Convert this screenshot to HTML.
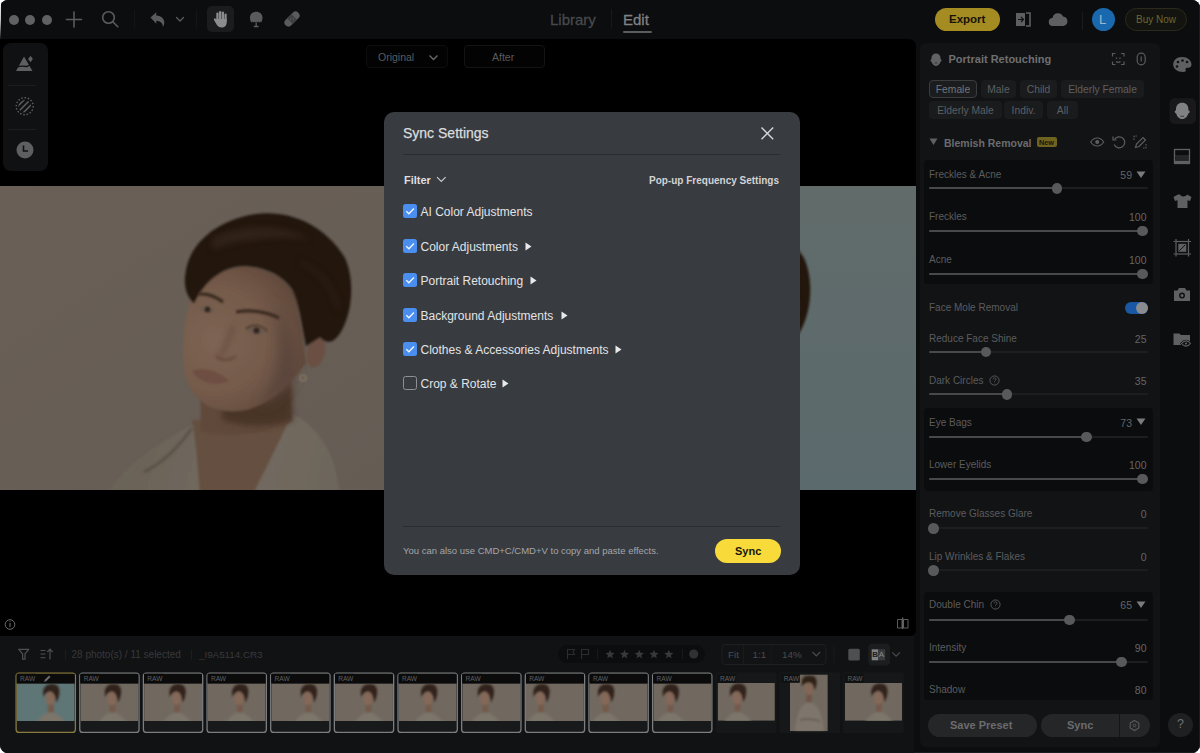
<!DOCTYPE html>
<html><head><meta charset="utf-8"><style>
*{margin:0;padding:0;box-sizing:border-box}
html,body{width:1200px;height:753px;overflow:hidden;background:#fff;font-family:"Liberation Sans",sans-serif}
#win{position:absolute;left:0;top:0;width:1200px;height:753px;background:#0c0d0f;border-radius:8px;overflow:hidden}
.a{position:absolute}
.t{position:absolute;white-space:nowrap;line-height:1}
svg.a{overflow:visible}
</style></head><body>
<div id="win">
<div class="a" style="left:0;top:0;width:1200px;height:40px;background:#0c0d0f"></div>
<div class="a" style="left:1199px;top:0;width:1px;height:753px;background:#1b1c1e"></div>
<div class="a" style="left:0;top:752px;width:1200px;height:1px;background:#1b1c1e"></div>
<!-- TOP BAR -->
<div class="a" style="left:9px;top:14.7px;width:10px;height:10px;border-radius:50%;background:#606163"></div>
<div class="a" style="left:25px;top:14.7px;width:10px;height:10px;border-radius:50%;background:#606163"></div>
<div class="a" style="left:41.5px;top:14.7px;width:10px;height:10px;border-radius:50%;background:#606163"></div>
<svg class="a" style="left:0;top:0" width="340" height="40" viewBox="0 0 340 40">
 <g stroke="#5a5b5d" fill="none" stroke-width="1.6" stroke-linecap="round">
  <path d="M74 12v15M66.5 19.5h15"/>
  <circle cx="108.5" cy="17.5" r="5.8"/>
  <path d="M112.8 21.8l5 5"/>
  <path d="M176.5 17.5l3.5 3.5 3.5-3.5" stroke-width="1.3"/>
 </g>
 <path d="M134.5 10v18M196.5 10v18" stroke="#141517" stroke-width="1"/>
 <path d="M150.5 17.5l5.8-5.2v3.2c4.5.2 8 2.8 8 7 0 1.8-.6 3.3-1.5 4.5.3-3.5-2.5-6-6.5-6.2v3z" fill="#5a5b5d"/>
 <rect x="207" y="6" width="27" height="26" rx="5" fill="#1b1c1e"/>
 <g fill="#8b8c8e"><rect x="216.3" y="12.5" width="2.3" height="10" rx="1.15"/><rect x="219" y="11" width="2.3" height="11" rx="1.15"/><rect x="221.7" y="11.5" width="2.3" height="11" rx="1.15"/><rect x="224.4" y="13.5" width="2.3" height="9" rx="1.15"/><path d="M216.3 19h10.4v3.5c0 3-2.2 5-5 5s-4.2-1.5-5.4-3.5l-2.3-4a1.1 1.1 0 0 1 1.9-1.1l.4.6z"/></g>
 <path d="M250 17.5c0-3.5 2.5-5.8 6.2-5.8s6.3 2.3 6.3 5.8c0 2-.6 3.8-1.3 5l-1-1-1 1.2-1-1.2-1 1.2-1-1.2-1 1.2-1-1.2-1 1.2-1-1.2-1 1c-.7-1.2-1.2-3-1.2-5z" fill="#5a5b5d"/><path d="M256.2 22.5v3.5M253.8 26.5h4.8" stroke="#5a5b5d" stroke-width="1.3"/>
 <g transform="rotate(-45 292 19)"><rect x="283" y="15" width="18" height="8" rx="4" fill="#5a5b5d"/><rect x="289" y="15" width="6" height="8" fill="#3f4042"/><circle cx="291" cy="18" r=".7" fill="#5a5b5d"/><circle cx="293" cy="20" r=".7" fill="#5a5b5d"/></g>
</svg>

<div class="t" style="left:550px;top:11.5px;font-size:15px;color:#48494b;-webkit-text-stroke:0.3px #48494b">Library</div>
<div class="a" style="left:611px;top:9px;width:1px;height:19px;background:#18191b"></div>
<div class="t" style="left:623px;top:11.5px;font-size:15px;color:#808183;-webkit-text-stroke:0.3px #808183">Edit</div>
<div class="a" style="left:623px;top:31px;width:29px;height:2px;background:#5c5d5f;border-radius:1px"></div>

<div class="a" style="left:935px;top:8px;width:65px;height:23px;border-radius:12px;background:#a58c22"></div>
<div class="t" style="left:949px;top:14px;font-size:11.5px;font-weight:bold;color:#15130a">Export</div>
<svg class="a" style="left:1010px;top:8px" width="65" height="24" viewBox="1010 8 65 24">
 <rect x="1016" y="13" width="9" height="13" fill="#5e5f61"/>
 <path d="M1026 13h4v13h-4" fill="none" stroke="#5e5f61" stroke-width="1.6"/>
 <path d="M1018 19.5h5.5M1021 17l2.5 2.5-2.5 2.5" stroke="#111" stroke-width="1.2" fill="none"/>
 <path d="M1053 26a4 4 0 0 1-.5-8 5.5 5.5 0 0 1 10.5-1.5 4.8 4.8 0 0 1 .5 9.5z" fill="#5e5f61"/>
</svg>
<div class="a" style="left:1082px;top:12px;width:1px;height:18px;background:#1a1b1d"></div>
<div class="a" style="left:1092px;top:8px;width:23px;height:23px;border-radius:50%;background:#1a68ad"></div>
<div class="t" style="left:1099px;top:13px;font-size:13px;color:#9fb8d0">L</div>
<div class="a" style="left:1125px;top:8px;width:62px;height:23px;border-radius:12px;background:#13130f;border:1px solid #2b2a1c"></div>
<div class="t" style="left:1136px;top:15px;font-size:10px;color:#6a692f">Buy Now</div>
<!-- CANVAS -->
<div class="a" style="left:0;top:39px;width:916px;height:597px;background:#000;border-radius:0 7px 6px 0;overflow:hidden">
 <svg class="a" style="left:0;top:147px;overflow:hidden" width="916" height="304" viewBox="0 0 916 304">
  <defs>
   <filter id="bl1" filterUnits="userSpaceOnUse" x="-100" y="-300" width="1200" height="900"><feGaussianBlur stdDeviation="1"/></filter>
   <filter id="bl2" filterUnits="userSpaceOnUse" x="-100" y="-300" width="1200" height="900"><feGaussianBlur stdDeviation="1.8"/></filter>
   <filter id="bl3" filterUnits="userSpaceOnUse" x="-100" y="-300" width="1200" height="900"><feGaussianBlur stdDeviation="3"/></filter>
   <filter id="bl4" filterUnits="userSpaceOnUse" x="-100" y="-300" width="1200" height="900"><feGaussianBlur stdDeviation="6"/></filter>
   <linearGradient id="bgL" x1="0" y1="0" x2="1" y2="1"><stop offset="0" stop-color="#695f57"/><stop offset="1" stop-color="#655d55"/></linearGradient>
   <linearGradient id="bgR" x1="0" y1="0" x2="0" y2="1"><stop offset="0" stop-color="#616b6a"/><stop offset="1" stop-color="#5b6a6d"/></linearGradient>
   <radialGradient id="skin" gradientUnits="userSpaceOnUse" cx="215" cy="340" r="100"><stop offset="0" stop-color="#7e6453"/><stop offset=".55" stop-color="#745a4a"/><stop offset="1" stop-color="#5c4538"/></radialGradient>
   <linearGradient id="shirtG" gradientUnits="userSpaceOnUse" x1="110" y1="430" x2="350" y2="490"><stop offset="0" stop-color="#6a6257"/><stop offset=".6" stop-color="#726a5f"/><stop offset="1" stop-color="#6c655a"/></linearGradient>
   <g id="woman" transform="translate(0,-186)">
    <path d="M108 494 C120 470 150 448 192 425 L205 418 L291 414 C305 418 318 432 328 450 C334 462 338 478 340 494 Z" fill="url(#shirtG)" filter="url(#bl1)"/>
    <path d="M192 420 C196 440 198 470 200 494 L253 494 C265 470 280 440 291 416 Z" fill="#655040" filter="url(#bl1)"/>
    <path d="M192 428 C180 445 165 462 144 472" stroke="#4e453b" stroke-width="2" fill="none" filter="url(#bl2)"/>
    <path d="M200 392 C201 405 201 418 200 431 C222 438 265 436 292 421 C290 405 290 392 291 380 Z" fill="#604a3b" filter="url(#bl1)"/>
    <path d="M222 404 C250 410 275 398 292 382 L293 420 C272 428 245 428 222 420 Z" fill="#4a3527" filter="url(#bl3)"/>
    <path d="M196 289 C186 305 183 330 183 363 C185 380 190 395 208 406 C220 412 235 413 250 409 C272 402 290 385 306 363 C304 345 300 320 296 296 C288 280 270 268 245 266 C225 267 205 277 196 289 Z" fill="url(#skin)" filter="url(#bl1)"/>
    <path d="M272 300 C290 325 298 350 295 378 C283 395 272 402 258 406 C278 382 287 345 272 300 Z" fill="#56423a" opacity=".75" filter="url(#bl4)"/>
    <ellipse cx="316" cy="352" rx="9" ry="16" fill="#6a5043" transform="rotate(15 316 352)" filter="url(#bl1)"/>
    <path d="M256 214 C290 210 325 225 345 258 C355 280 352 310 343 328 C336 342 328 346 320 337 L306 346 C301 322 299 302 292 289 C282 275 265 267 245 266 C225 266 206 278 194 303 C186 296 183 285 186 270 C190 245 215 220 256 214 Z" fill="#231810" filter="url(#bl1)"/>
    <path d="M212 238 C240 224 282 222 312 240 C290 236 250 236 212 250 Z" fill="#3a2c21" opacity=".6" filter="url(#bl3)"/>
    <path d="M300 262 C320 270 335 290 338 310" stroke="#35281e" stroke-width="4" opacity=".5" fill="none" filter="url(#bl3)"/>
    <path d="M198 294 Q211 293 223 302" stroke="#3a2b22" stroke-width="3.2" fill="none" filter="url(#bl1)"/>
    <path d="M236 312 Q258 308 279 318" stroke="#3a2b22" stroke-width="3.2" fill="none" filter="url(#bl1)"/>
    <path d="M199 309 C203 305 211 305 215 311 C210 314 203 313 199 309Z" fill="#6a5a50" filter="url(#bl1)"/><circle cx="207.5" cy="309.5" r="2.8" fill="#30231b" filter="url(#bl1)"/>
    <path d="M247 330 C252 325 261 325 266 332 C260 336 252 335 247 330Z" fill="#6a5a50" filter="url(#bl1)"/><circle cx="256.5" cy="330.5" r="3" fill="#30231b" filter="url(#bl1)"/><path d="M246 329 C252 324 261 324 267 331" stroke="#3a2b22" stroke-width="1.2" fill="none" filter="url(#bl1)"/>
    <path d="M234 325 C230 338 224 348 221 356" stroke="#5e4739" stroke-width="3" fill="none" filter="url(#bl3)"/>
    <path d="M216 356 C222 361 230 361 236 356" stroke="#5e4538" stroke-width="2.2" fill="none" filter="url(#bl2)"/>
    <path d="M192 371 C205 366 220 372 229 381 C215 387 200 383 192 371 Z" fill="#6e4d42" filter="url(#bl1)"/>
    <circle cx="303" cy="378" r="3" fill="none" stroke="#8e8068" stroke-width="1.2" filter="url(#bl1)"/>
   </g>
  </defs>
  <rect x="0" y="0" width="457" height="304" fill="url(#bgL)"/>
  <use href="#woman"/>
  <rect x="459" y="0" width="457" height="304" fill="url(#bgR)"/>
  <use href="#woman" x="459"/>
 </svg>
</div>
<!-- left tools -->
<div class="a" style="left:3px;top:43px;width:45px;height:128px;background:#101113;border-radius:8px"></div>
<div class="a" style="left:8px;top:85px;width:28px;height:1px;background:#1c1d1f"></div>
<div class="a" style="left:8px;top:129px;width:28px;height:1px;background:#1c1d1f"></div>
<svg class="a" style="left:0;top:40px" width="50" height="130" viewBox="0 40 50 130">
 <path d="M16 71l8-14.5 8.5 14.5z" fill="#5e5f61"/>
 <path d="M17.5 67c2.5-1.5 6.5-1 9.5-.5 1.5-.3 3-1.8 4-3.5" stroke="#101113" stroke-width="1.3" fill="none"/>
 <path d="M30.5 55.5l1.6 3.2 1.6.3-1.6.3-1.6 3.2-1.6-3.2-1.6-.3 1.6-.3z" fill="#5e5f61"/>
 <circle cx="30.5" cy="59" r="2" fill="#5e5f61"/>
 <circle cx="24.7" cy="106.2" r="8.5" fill="none" stroke="#5e5f61" stroke-width="1.4" stroke-dasharray="1.5 1.8"/>
 <clipPath id="cc"><circle cx="24.7" cy="106.2" r="6.3"/></clipPath>
 <g clip-path="url(#cc)" stroke="#5e5f61" stroke-width="1.5"><path d="M12 112l14-14M15 115l14-14M18 118l14-14M9 109l14-14M21 121l14-14"/></g>
 <circle cx="25" cy="150" r="8.5" fill="#5e5f61"/>
 <path d="M23.5 145.5v5.5h4.5" stroke="#111" stroke-width="1.6" fill="none"/>
</svg>
<!-- Original / After -->
<div class="a" style="left:366px;top:45px;width:82px;height:23px;border:1px solid #0d0d0e;border-radius:4px;background:#030303"></div>
<div class="t" style="left:378px;top:52px;font-size:10.5px;color:#5a5b5d">Original</div>
<svg class="a" style="left:428px;top:53.5px" width="12" height="8"><path d="M1.5 1.5l4 4 4-4" stroke="#6a6b6d" stroke-width="1.3" fill="none"/></svg>
<div class="a" style="left:464px;top:45px;width:81px;height:23px;border:1px solid #141415;border-radius:4px;background:#030303"></div>
<div class="t" style="left:492px;top:52px;font-size:10.5px;color:#5a5b5d">After</div>
<!-- info & compare -->
<svg class="a" style="left:0;top:610px" width="920" height="30" viewBox="0 610 920 30">
 <circle cx="10" cy="624.5" r="4.8" fill="none" stroke="#6a6b6d" stroke-width="1"/>
 <path d="M10 623v4M10 621.3v.6" stroke="#6a6b6d" stroke-width="1.1"/>
 <path d="M897.5 619.5h4.5v8.5h-4.5zM903.5 619.5h4.5v8.5h-4.5z" fill="none" stroke="#5a5b5d" stroke-width="1"/>
 <path d="M902.7 617.5v11.5" stroke="#6a6b6d" stroke-width="1.2"/>
</svg>
<!-- RIGHT PANEL -->
<div class="a" style="left:920px;top:43px;width:240px;height:704px;background:#121315;border-radius:6px"></div>
<!-- sub cards -->
<div class="a" style="left:924px;top:160px;width:229px;height:124px;background:#0b0c0d;border-radius:4px"></div>
<div class="a" style="left:924px;top:408px;width:229px;height:83px;background:#0b0c0d;border-radius:4px"></div>
<div class="a" style="left:924px;top:592px;width:229px;height:108px;background:#0b0c0d;border-radius:4px"></div>
<!-- header -->
<svg class="a" style="left:928px;top:50px" width="16" height="18" viewBox="0 0 16 18"><path d="M8 3.5c2.9 0 4.6 2 4.6 5v1c.6 0 1 .4 1 .9s-.4 1.1-1.1 1.3c-.5 2-2.1 4.2-4.5 4.2s-4-2.2-4.5-4.2c-.7-.2-1.1-.8-1.1-1.3s.4-.9 1-.9v-1c0-3 1.7-5 4.6-5z" fill="#616264"/><path d="M6.6 13h2.8" stroke="#333436" stroke-width=".9"/></svg>
<div class="t" style="left:948.5px;top:54px;font-size:11px;font-weight:bold;color:#6e6f71">Portrait Retouching</div>
<svg class="a" style="left:1110px;top:50px" width="40" height="18" viewBox="1110 50 40 18">
 <g fill="none" stroke="#5a5b5d" stroke-width="1.2">
  <path d="M1112.5 56.5v-3h3M1121 53.5h3v3M1124 61.5v3h-3M1115.5 64.5h-3v-3"/>
  <path d="M1116.5 57.5v1.5M1120 57.5v1.5M1116 61.5c1.3 1 3.2 1 4.5 0"/>
  <rect x="1137.2" y="53.2" width="8" height="11.6" rx="4"/>
  <path d="M1141.2 56.5v5"/>
 </g>
</svg>
<div class="a" style="left:929px;top:80px;width:48px;height:18px;border-radius:4px;background:#1b1c1e;border:1px solid #3b3c3e"></div>
<div class="t" style="left:935.8px;top:84.5px;font-size:10.3px;color:#747577">Female</div>
<div class="a" style="left:981px;top:80px;width:35px;height:18px;border-radius:4px;background:#1a1b1d"></div>
<div class="t" style="left:987.3px;top:84.5px;font-size:10.3px;color:#5e5f61">Male</div>
<div class="a" style="left:1020px;top:80px;width:37px;height:18px;border-radius:4px;background:#1a1b1d"></div>
<div class="t" style="left:1026.8px;top:84.5px;font-size:10.3px;color:#5e5f61">Child</div>
<div class="a" style="left:1061px;top:80px;width:83px;height:18px;border-radius:4px;background:#1a1b1d"></div>
<div class="t" style="left:1068.2px;top:84.5px;font-size:10.3px;color:#5e5f61">Elderly Female</div>
<div class="a" style="left:929px;top:101px;width:73px;height:18px;border-radius:4px;background:#1a1b1d"></div>
<div class="t" style="left:937.2px;top:105.5px;font-size:10.3px;color:#5e5f61">Elderly Male</div>
<div class="a" style="left:1004px;top:101px;width:39px;height:18px;border-radius:4px;background:#1a1b1d"></div>
<div class="t" style="left:1011.6px;top:105.5px;font-size:10.3px;color:#5e5f61">Indiv.</div>
<div class="a" style="left:1047px;top:101px;width:31px;height:18px;border-radius:4px;background:#1a1b1d"></div>
<div class="t" style="left:1056.8px;top:105.5px;font-size:10.3px;color:#5e5f61">All</div>
<svg class="a" style="left:928px;top:137px" width="10" height="9" viewBox="0 0 10 9"><path d="M1.5 1.5h8l-4 6.5z" fill="#5f6062"/></svg>
<div class="t" style="left:944px;top:137.5px;font-size:10.5px;font-weight:bold;color:#6b6c6e">Blemish Removal</div>
<div class="a" style="left:1037px;top:137px;width:20px;height:10px;border-radius:2px;background:#6f6320"></div>
<div class="t" style="left:1039px;top:138.8px;font-size:7.3px;font-weight:bold;color:#191708">New</div>
<svg class="a" style="left:1085px;top:132px" width="65" height="20" viewBox="1085 132 65 20">
 <g fill="none" stroke="#5c5d5f" stroke-width="1.2">
  <path d="M1090.7 142c1.8-2.8 4-4 6.5-4s4.7 1.2 6.5 4c-1.8 2.8-4 4-6.5 4s-4.7-1.2-6.5-4z"/>
  <circle cx="1097.2" cy="142" r="1.4" fill="#5c5d5f"/>
  <path d="M1114.5 139.5a5.5 5.5 0 1 1-.3 5"/>
  <path d="M1113 136.5v3.5h3.5"/>
  <path d="M1135.5 147.5l1-3.5 6.5-6.5 2.5 2.5-6.5 6.5z"/>
  <path d="M1134 140v-4h4M1146 144v4h-4" stroke-dasharray="1.5 1.2"/>
 </g>
</svg>
<div class="t" style="left:929px;top:169.8px;font-size:10px;color:#5b5c5e">Freckles &amp; Acne</div>
<div class="t" style="left:1120.3px;top:169.8px;font-size:10.5px;color:#646567">59</div>
<svg class="a" style="left:1136px;top:170.5px" width="10" height="8" viewBox="0 0 10 8"><path d="M.5 .5h9l-4.5 6.5z" fill="#7a7b7d"/></svg>
<div class="a" style="left:929px;top:187.3px;width:219px;height:2px;background:#1d1e20;border-radius:1px"></div>
<div class="a" style="left:929px;top:187.3px;width:128.0px;height:2px;background:#48494b;border-radius:1px"></div>
<div class="a" style="left:1051.7px;top:183.0px;width:10.6px;height:10.6px;border-radius:50%;background:#58595b"></div>
<div class="t" style="left:929px;top:211.8px;font-size:10px;color:#5b5c5e">Freckles</div>
<div class="t" style="left:1129.0px;top:211.8px;font-size:10.5px;color:#646567">100</div>
<div class="a" style="left:929px;top:230.0px;width:219px;height:2px;background:#1d1e20;border-radius:1px"></div>
<div class="a" style="left:929px;top:230.0px;width:213.7px;height:2px;background:#48494b;border-radius:1px"></div>
<div class="a" style="left:1137.4px;top:225.7px;width:10.6px;height:10.6px;border-radius:50%;background:#58595b"></div>
<div class="t" style="left:929px;top:254.5px;font-size:10px;color:#5b5c5e">Acne</div>
<div class="t" style="left:1129.0px;top:254.5px;font-size:10.5px;color:#646567">100</div>
<div class="a" style="left:929px;top:272.8px;width:219px;height:2px;background:#1d1e20;border-radius:1px"></div>
<div class="a" style="left:929px;top:272.8px;width:213.7px;height:2px;background:#48494b;border-radius:1px"></div>
<div class="a" style="left:1137.4px;top:268.5px;width:10.6px;height:10.6px;border-radius:50%;background:#58595b"></div>
<div class="t" style="left:929px;top:333.6px;font-size:10px;color:#5b5c5e">Reduce Face Shine</div>
<div class="t" style="left:1134.8px;top:333.6px;font-size:10.5px;color:#646567">25</div>
<div class="a" style="left:929px;top:351.0px;width:219px;height:2px;background:#1d1e20;border-radius:1px"></div>
<div class="a" style="left:929px;top:351.0px;width:57.0px;height:2px;background:#48494b;border-radius:1px"></div>
<div class="a" style="left:980.7px;top:346.7px;width:10.6px;height:10.6px;border-radius:50%;background:#58595b"></div>
<div class="t" style="left:929px;top:376.0px;font-size:10px;color:#5b5c5e">Dark Circles</div>
<div class="t" style="left:1134.8px;top:376.0px;font-size:10.5px;color:#646567">35</div>
<svg class="a" style="left:989.4px;top:375.2px" width="11" height="11" viewBox="0 0 11 11"><circle cx="5.5" cy="5.5" r="4.6" fill="none" stroke="#55565a" stroke-width="1"/><path d="M4 4.3a1.5 1.5 0 1 1 2 1.4c-.5.2-.5.5-.5 1M5.5 7.8v.5" fill="none" stroke="#55565a" stroke-width=".9"/></svg>
<div class="a" style="left:929px;top:393.4px;width:219px;height:2px;background:#1d1e20;border-radius:1px"></div>
<div class="a" style="left:929px;top:393.4px;width:78.0px;height:2px;background:#48494b;border-radius:1px"></div>
<div class="a" style="left:1001.7px;top:389.1px;width:10.6px;height:10.6px;border-radius:50%;background:#58595b"></div>
<div class="t" style="left:929px;top:417.6px;font-size:10px;color:#5b5c5e">Eye Bags</div>
<div class="t" style="left:1120.3px;top:417.6px;font-size:10.5px;color:#646567">73</div>
<svg class="a" style="left:1136px;top:418.3px" width="10" height="8" viewBox="0 0 10 8"><path d="M.5 .5h9l-4.5 6.5z" fill="#7a7b7d"/></svg>
<div class="a" style="left:929px;top:436.0px;width:219px;height:2px;background:#1d1e20;border-radius:1px"></div>
<div class="a" style="left:929px;top:436.0px;width:157.4px;height:2px;background:#48494b;border-radius:1px"></div>
<div class="a" style="left:1081.1px;top:431.7px;width:10.6px;height:10.6px;border-radius:50%;background:#58595b"></div>
<div class="t" style="left:929px;top:460.4px;font-size:10px;color:#5b5c5e">Lower Eyelids</div>
<div class="t" style="left:1129.0px;top:460.4px;font-size:10.5px;color:#646567">100</div>
<div class="a" style="left:929px;top:478.0px;width:219px;height:2px;background:#1d1e20;border-radius:1px"></div>
<div class="a" style="left:929px;top:478.0px;width:213.6px;height:2px;background:#48494b;border-radius:1px"></div>
<div class="a" style="left:1137.3px;top:473.7px;width:10.6px;height:10.6px;border-radius:50%;background:#58595b"></div>
<div class="t" style="left:929px;top:508.9px;font-size:10px;color:#5b5c5e">Remove Glasses Glare</div>
<div class="t" style="left:1140.7px;top:508.9px;font-size:10.5px;color:#646567">0</div>
<div class="a" style="left:929px;top:527.3px;width:219px;height:2px;background:#1d1e20;border-radius:1px"></div>
<div class="a" style="left:929px;top:527.3px;width:4.4px;height:2px;background:#48494b;border-radius:1px"></div>
<div class="a" style="left:928.1px;top:523.0px;width:10.6px;height:10.6px;border-radius:50%;background:#58595b"></div>
<div class="t" style="left:929px;top:551.5px;font-size:10px;color:#5b5c5e">Lip Wrinkles &amp; Flakes</div>
<div class="t" style="left:1140.7px;top:551.5px;font-size:10.5px;color:#646567">0</div>
<div class="a" style="left:929px;top:569.4px;width:219px;height:2px;background:#1d1e20;border-radius:1px"></div>
<div class="a" style="left:929px;top:569.4px;width:4.4px;height:2px;background:#48494b;border-radius:1px"></div>
<div class="a" style="left:928.1px;top:565.1px;width:10.6px;height:10.6px;border-radius:50%;background:#58595b"></div>
<div class="t" style="left:929px;top:600.2px;font-size:10px;color:#5b5c5e">Double Chin</div>
<div class="t" style="left:1120.3px;top:600.2px;font-size:10.5px;color:#646567">65</div>
<svg class="a" style="left:1136px;top:600.9px" width="10" height="8" viewBox="0 0 10 8"><path d="M.5 .5h9l-4.5 6.5z" fill="#7a7b7d"/></svg>
<svg class="a" style="left:990.0px;top:599.4px" width="11" height="11" viewBox="0 0 11 11"><circle cx="5.5" cy="5.5" r="4.6" fill="none" stroke="#55565a" stroke-width="1"/><path d="M4 4.3a1.5 1.5 0 1 1 2 1.4c-.5.2-.5.5-.5 1M5.5 7.8v.5" fill="none" stroke="#55565a" stroke-width=".9"/></svg>
<div class="a" style="left:929px;top:618.8px;width:219px;height:2px;background:#1d1e20;border-radius:1px"></div>
<div class="a" style="left:929px;top:618.8px;width:140.4px;height:2px;background:#48494b;border-radius:1px"></div>
<div class="a" style="left:1064.1px;top:614.5px;width:10.6px;height:10.6px;border-radius:50%;background:#58595b"></div>
<div class="t" style="left:929px;top:642.8px;font-size:10px;color:#5b5c5e">Intensity</div>
<div class="t" style="left:1134.8px;top:642.8px;font-size:10.5px;color:#646567">90</div>
<div class="a" style="left:929px;top:661.1px;width:219px;height:2px;background:#1d1e20;border-radius:1px"></div>
<div class="a" style="left:929px;top:661.1px;width:192.4px;height:2px;background:#48494b;border-radius:1px"></div>
<div class="a" style="left:1116.1px;top:656.8px;width:10.6px;height:10.6px;border-radius:50%;background:#58595b"></div>
<div class="t" style="left:929px;top:685.4px;font-size:10px;color:#5b5c5e">Shadow</div>
<div class="t" style="left:1134.8px;top:685.4px;font-size:10.5px;color:#646567">80</div>
<div class="t" style="left:929px;top:303px;font-size:10px;color:#5b5c5e">Face Mole Removal</div>
<div class="a" style="left:1125px;top:301.5px;width:22.5px;height:12.5px;border-radius:6.25px;background:#1b58a3"></div>
<div class="a" style="left:1135.5px;top:301.8px;width:12px;height:12px;border-radius:50%;background:#8a8c90"></div>
<!-- bottom buttons -->
<div class="a" style="left:927.5px;top:713.5px;width:109px;height:23px;border-radius:11.5px;background:#252628"></div>
<div class="t" style="left:950px;top:720px;font-size:11px;font-weight:bold;color:#6a6b6d">Save Preset</div>
<div class="a" style="left:1040.5px;top:713.5px;width:109px;height:23px;border-radius:11.5px;background:#252628"></div>
<div class="a" style="left:1118.5px;top:713.5px;width:1px;height:23px;background:#141517"></div>
<div class="t" style="left:1067px;top:720px;font-size:11px;font-weight:bold;color:#6a6b6d">Sync</div>
<svg class="a" style="left:1128px;top:718.5px" width="13" height="13" viewBox="0 0 13 13"><polygon points="6.50,1.50 10.83,4.00 10.83,9.00 6.50,11.50 2.17,9.00 2.17,4.00" fill="none" stroke="#5a5b5d" stroke-width="1.1"/><circle cx="6.5" cy="6.5" r="1.3" fill="none" stroke="#5a5b5d" stroke-width=".9"/></svg>
<div class="a" style="left:1168px;top:712.5px;width:24.5px;height:24px;border-radius:50%;background:#1f2022"></div>
<div class="t" style="left:1177px;top:718px;font-size:12.5px;color:#707173">?</div>
<svg class="a" style="left:1165px;top:50px" width="35" height="300" viewBox="1165 50 35 300">
 <path d="M1182 57c5.5 0 9.5 3.5 9.5 7.5 0 2.5-2 3.5-4 3.2-1.5-.2-2.5.8-1.8 2.3.5 1-.3 2-2.5 2-6 0-10-3.5-10-7.5s3.5-7.5 8.8-7.5z" fill="#5f6062"/>
 <circle cx="1178" cy="62" r="1.3" fill="#111"/><circle cx="1182.5" cy="60.5" r="1.3" fill="#111"/><circle cx="1187" cy="62" r="1.3" fill="#111"/><circle cx="1177" cy="66.5" r="1.3" fill="#111"/>
 <rect x="1169.5" y="98.3" width="26.5" height="25.7" rx="5" fill="#19191b"/>
 <path d="M1182.2 102.7c3.8 0 6.2 2.6 6.2 6.5v1.3c.8 0 1.3.5 1.3 1.2s-.5 1.5-1.5 1.7c-.6 2.6-2.8 5.6-6 5.6s-5.4-3-6-5.6c-1-.2-1.5-1-1.5-1.7s.5-1.2 1.3-1.2v-1.3c0-3.9 2.4-6.5 6.2-6.5z" fill="#808183"/>
 <path d="M1180.3 116.2h3.8" stroke="#3a3b3d" stroke-width="1.1"/>
 <rect x="1174.5" y="149.5" width="15" height="14" fill="none" stroke="#5f6062" stroke-width="1.3"/>
 <g fill="#5f6062"><rect x="1175.5" y="155.5" width="1.1" height="1.1"/><rect x="1177.5" y="155.5" width="1.1" height="1.1"/><rect x="1179.5" y="155.5" width="1.1" height="1.1"/><rect x="1181.5" y="155.5" width="1.1" height="1.1"/><rect x="1183.5" y="155.5" width="1.1" height="1.1"/><rect x="1185.5" y="155.5" width="1.1" height="1.1"/><rect x="1187.5" y="155.5" width="1.1" height="1.1"/><rect x="1176.5" y="157.5" width="1.1" height="1.1"/><rect x="1178.5" y="157.5" width="1.1" height="1.1"/><rect x="1180.5" y="157.5" width="1.1" height="1.1"/><rect x="1182.5" y="157.5" width="1.1" height="1.1"/><rect x="1184.5" y="157.5" width="1.1" height="1.1"/><rect x="1186.5" y="157.5" width="1.1" height="1.1"/><rect x="1188.5" y="157.5" width="1.1" height="1.1"/><rect x="1175.5" y="159.5" width="1.1" height="1.1"/><rect x="1177.5" y="159.5" width="1.1" height="1.1"/><rect x="1179.5" y="159.5" width="1.1" height="1.1"/><rect x="1181.5" y="159.5" width="1.1" height="1.1"/><rect x="1183.5" y="159.5" width="1.1" height="1.1"/><rect x="1185.5" y="159.5" width="1.1" height="1.1"/><rect x="1187.5" y="159.5" width="1.1" height="1.1"/><rect x="1176.5" y="161.5" width="1.1" height="1.1"/><rect x="1178.5" y="161.5" width="1.1" height="1.1"/><rect x="1180.5" y="161.5" width="1.1" height="1.1"/><rect x="1182.5" y="161.5" width="1.1" height="1.1"/><rect x="1184.5" y="161.5" width="1.1" height="1.1"/><rect x="1186.5" y="161.5" width="1.1" height="1.1"/><rect x="1188.5" y="161.5" width="1.1" height="1.1"/></g>
 <rect x="1175" y="161" width="14" height="2" fill="#5f6062"/>
 <path d="M1178 194.5l-4.5 2.5 1.5 4 2.5-.8v7.8h10v-7.8l2.5.8 1.5-4-4.5-2.5c-.5 1.2-1.8 2-3.5 2s-3-.8-3.5-2z" fill="#5f6062"/>
 <g fill="none" stroke="#5f6062" stroke-width="1.2"><rect x="1176" y="241.5" width="12.5" height="12.5"/><path d="M1173.5 241.5h2M1176 239v2M1188.5 239v2M1191 241.5h-2M1173.5 254h2M1176 256.5v-2M1188.5 256.5v-2M1191 254h-2"/></g>
 <rect x="1178.3" y="243.8" width="8" height="8" fill="#5f6062"/><path d="M1179.3 250.8l6-6" stroke="#111" stroke-width="1"/>
 <path d="M1174 290.5h3.5l1.5-2.5h6l1.5 2.5h3.5v10.5h-16z" fill="#5f6062"/>
 <circle cx="1182" cy="295.5" r="3" fill="#111"/><circle cx="1182" cy="295.5" r="1.5" fill="#5f6062"/>
 <path d="M1173.5 333.5h6l1.5 1.5h9v10h-16.5z" fill="#5f6062"/>
 <path d="M1181 343.5c1.5-2 3-3 5-3s3.5 1 5 3c-1.5 2-3 3-5 3s-3.5-1-5-3z" fill="#111" stroke="#111" stroke-width="1.6"/>
 <path d="M1181.5 343.5c1.4-1.8 2.8-2.6 4.5-2.6s3.1.8 4.5 2.6c-1.4 1.8-2.8 2.6-4.5 2.6s-3.1-.8-4.5-2.6z" fill="none" stroke="#5f6062" stroke-width="1.1"/>
 <circle cx="1186" cy="343.5" r="1.1" fill="#5f6062"/>
</svg>
<!-- FILMSTRIP -->
<div class="a" style="left:0;top:636px;width:914px;height:117px;background:#111214"></div>
<svg class="a" style="left:0;top:640px" width="270" height="30" viewBox="0 640 270 30">
 <path d="M18.8 649.3h10l-3.8 4.6v5.3h-2.4v-5.3z" fill="none" stroke="#4f5052" stroke-width="1.2" stroke-linejoin="round"/>
 <path d="M40.5 650.5h5M40.5 654h5M40.5 657.8h5" stroke="#4f5052" stroke-width="1.1"/>
 <path d="M50 659.5v-10M47.3 652l2.7-2.8 2.7 2.8" stroke="#4f5052" stroke-width="1.2" fill="none"/>
 <path d="M65.5 650v10M191.5 650v10" stroke="#1c1d1f" stroke-width="1"/>
</svg>
<div class="t" style="left:71.5px;top:650px;font-size:10px;color:#38393b">28 photo(s) / 11 selected</div>
<div class="t" style="left:199px;top:650px;font-size:9.8px;color:#38393b">_I9A5114.CR3</div>
<!-- rating group -->
<div class="a" style="left:558px;top:644.5px;width:147px;height:18px;border-radius:9px;background:#0c0d0e"></div>
<svg class="a" style="left:555px;top:640px" width="360" height="30" viewBox="555 640 360 30">
 <g fill="none" stroke="#2c2d2f" stroke-width="1.1"><path d="M567.5 659v-9.5h7l-1.5 2.5 1.5 2.5h-7"/><path d="M581.5 659v-9.5h7v5h-7"/></g>
 <path d="M597.5 649v10M682.5 649v10" stroke="#1a1b1d" stroke-width="1"/>
 <g fill="#38393b">
 <polygon points="610.00,649.70 611.23,652.80 614.57,653.02 612.00,655.15 612.82,658.38 610.00,656.60 607.18,658.38 608.00,655.15 605.43,653.02 608.77,652.80"/><polygon points="624.50,649.70 625.73,652.80 629.07,653.02 626.50,655.15 627.32,658.38 624.50,656.60 621.68,658.38 622.50,655.15 619.93,653.02 623.27,652.80"/><polygon points="639.30,649.70 640.53,652.80 643.87,653.02 641.30,655.15 642.12,658.38 639.30,656.60 636.48,658.38 637.30,655.15 634.73,653.02 638.07,652.80"/><polygon points="654.00,649.70 655.23,652.80 658.57,653.02 656.00,655.15 656.82,658.38 654.00,656.60 651.18,658.38 652.00,655.15 649.43,653.02 652.77,652.80"/><polygon points="668.80,649.70 670.03,652.80 673.37,653.02 670.80,655.15 671.62,658.38 668.80,656.60 665.98,658.38 666.80,655.15 664.23,653.02 667.57,652.80"/></g>
 <circle cx="693.7" cy="654" r="4.6" fill="#303133"/>
 <rect x="722" y="644.5" width="104" height="20" rx="3" fill="#121315" stroke="#1e1f21" stroke-width="1"/>
 <path d="M743.5 645v19M771 645v19" stroke="#1a1b1d" stroke-width="1"/>
 <path d="M812.5 652l3.8 3.8 3.8-3.8" stroke="#4a4b4d" stroke-width="1.2" fill="none"/>
 <path d="M834 646v17" stroke="#1a1b1d" stroke-width="1"/>
 <rect x="848.3" y="648.8" width="11.5" height="11.7" rx="1.5" fill="#4e4f51"/>
 <rect x="868.3" y="643.8" width="21.7" height="21.7" rx="4" fill="#1c1d1f"/>
 <rect x="871.7" y="649.3" width="6.7" height="11" fill="#808183"/>
 <rect x="878.4" y="649.3" width="6.7" height="11" fill="#3a3b3d"/>
 <path d="M892.3 652.3l3.8 3.8 3.8-3.8" stroke="#4a4b4d" stroke-width="1.2" fill="none"/>
</svg>
<div class="t" style="left:728px;top:650px;font-size:9.8px;color:#4b4c4e">Fit</div>
<div class="t" style="left:752.5px;top:650px;font-size:9.8px;color:#4b4c4e">1:1</div>
<div class="t" style="left:782px;top:650px;font-size:9.8px;color:#4b4c4e">14%</div>
<div class="t" style="left:872.3px;top:651px;font-size:8px;font-weight:bold;color:#1a1a1a">B</div>
<div class="t" style="left:878.8px;top:651px;font-size:8px;color:#8a8b8d">A</div>
<!-- thumbnails -->
<svg class="a" style="left:0;top:668px" width="916" height="70" viewBox="0 668 916 70">
 <defs>
  <filter id="tb" filterUnits="userSpaceOnUse" x="-200" y="-200" width="1400" height="1400"><feGaussianBlur stdDeviation="1"/></filter>
  <g id="tw" filter="url(#tb)">
   <path d="M-18 40C-15 27-8 21 0 18.5C8 21 15 27 19 40z" fill="#7c746a"/>
   <path d="M-3 10v9c1.5 1 4.5 1 6 0v-9z" fill="#735a4b"/>
   <ellipse cx="-0.5" cy="5.5" rx="4.8" ry="6.8" fill="#846858"/>
   <path d="M-7.5 2C-8.5-5-5-9 1-9C7-9 9.5-5 8.5 1C8 5 6.5 8 5 9.5C5 4 3.5 0 0-1.5C-3-1.5-5 0-7.5 4z" fill="#30231a"/>
  </g>
 </defs>
 <rect x="16.10" y="673.1" width="59.3" height="59.3" rx="3" fill="#18191b" stroke="#8a7c3c" stroke-width="1.3"/>
 <rect x="16.80" y="673.8" width="57.9" height="9.6" fill="#0b0b0c"/>
 <svg x="16.80" y="683.4" width="57.9" height="37.6" viewBox="0 0 57.9 37.6"><rect width="57.9" height="37.6" fill="#5f7676"/><use href="#tw" x="34" y="9.5"/></svg>
 <rect x="16.80" y="673.8" width="19" height="9" fill="#0b0b0c"/>
 <rect x="79.75" y="673.1" width="59.3" height="59.3" rx="3" fill="#18191b" stroke="#7c7d7f" stroke-width="1.3"/>
 <rect x="80.45" y="673.8" width="57.9" height="9.6" fill="#0b0b0c"/>
 <svg x="80.45" y="683.4" width="57.9" height="37.6" viewBox="0 0 57.9 37.6"><rect width="57.9" height="37.6" fill="#716960"/><use href="#tw" x="32" y="9.5"/></svg>
 <rect x="80.45" y="673.8" width="19" height="9" fill="#0b0b0c"/>
 <rect x="143.40" y="673.1" width="59.3" height="59.3" rx="3" fill="#18191b" stroke="#7c7d7f" stroke-width="1.3"/>
 <rect x="144.10" y="673.8" width="57.9" height="9.6" fill="#0b0b0c"/>
 <svg x="144.10" y="683.4" width="57.9" height="37.6" viewBox="0 0 57.9 37.6"><rect width="57.9" height="37.6" fill="#716960"/><use href="#tw" x="33" y="9.5"/></svg>
 <rect x="144.10" y="673.8" width="19" height="9" fill="#0b0b0c"/>
 <rect x="207.05" y="673.1" width="59.3" height="59.3" rx="3" fill="#18191b" stroke="#7c7d7f" stroke-width="1.3"/>
 <rect x="207.75" y="673.8" width="57.9" height="9.6" fill="#0b0b0c"/>
 <svg x="207.75" y="683.4" width="57.9" height="37.6" viewBox="0 0 57.9 37.6"><rect width="57.9" height="37.6" fill="#716960"/><use href="#tw" x="32" y="9.5"/></svg>
 <rect x="207.75" y="673.8" width="19" height="9" fill="#0b0b0c"/>
 <rect x="270.70" y="673.1" width="59.3" height="59.3" rx="3" fill="#18191b" stroke="#7c7d7f" stroke-width="1.3"/>
 <rect x="271.40" y="673.8" width="57.9" height="9.6" fill="#0b0b0c"/>
 <svg x="271.40" y="683.4" width="57.9" height="37.6" viewBox="0 0 57.9 37.6"><rect width="57.9" height="37.6" fill="#716960"/><use href="#tw" x="37" y="9.5"/></svg>
 <rect x="271.40" y="673.8" width="19" height="9" fill="#0b0b0c"/>
 <rect x="334.35" y="673.1" width="59.3" height="59.3" rx="3" fill="#18191b" stroke="#7c7d7f" stroke-width="1.3"/>
 <rect x="335.05" y="673.8" width="57.9" height="9.6" fill="#0b0b0c"/>
 <svg x="335.05" y="683.4" width="57.9" height="37.6" viewBox="0 0 57.9 37.6"><rect width="57.9" height="37.6" fill="#716960"/><use href="#tw" x="33.5" y="9.5"/></svg>
 <rect x="335.05" y="673.8" width="19" height="9" fill="#0b0b0c"/>
 <rect x="398.00" y="673.1" width="59.3" height="59.3" rx="3" fill="#18191b" stroke="#7c7d7f" stroke-width="1.3"/>
 <rect x="398.70" y="673.8" width="57.9" height="9.6" fill="#0b0b0c"/>
 <svg x="398.70" y="683.4" width="57.9" height="37.6" viewBox="0 0 57.9 37.6"><rect width="57.9" height="37.6" fill="#716960"/><use href="#tw" x="30" y="9.5"/></svg>
 <rect x="398.70" y="673.8" width="19" height="9" fill="#0b0b0c"/>
 <rect x="461.65" y="673.1" width="59.3" height="59.3" rx="3" fill="#18191b" stroke="#7c7d7f" stroke-width="1.3"/>
 <rect x="462.35" y="673.8" width="57.9" height="9.6" fill="#0b0b0c"/>
 <svg x="462.35" y="683.4" width="57.9" height="37.6" viewBox="0 0 57.9 37.6"><rect width="57.9" height="37.6" fill="#716960"/><use href="#tw" x="23" y="9.5"/></svg>
 <rect x="462.35" y="673.8" width="19" height="9" fill="#0b0b0c"/>
 <rect x="525.30" y="673.1" width="59.3" height="59.3" rx="3" fill="#18191b" stroke="#7c7d7f" stroke-width="1.3"/>
 <rect x="526.00" y="673.8" width="57.9" height="9.6" fill="#0b0b0c"/>
 <svg x="526.00" y="683.4" width="57.9" height="37.6" viewBox="0 0 57.9 37.6"><rect width="57.9" height="37.6" fill="#716960"/><use href="#tw" x="15" y="9.5"/></svg>
 <rect x="526.00" y="673.8" width="19" height="9" fill="#0b0b0c"/>
 <rect x="588.95" y="673.1" width="59.3" height="59.3" rx="3" fill="#18191b" stroke="#7c7d7f" stroke-width="1.3"/>
 <rect x="589.65" y="673.8" width="57.9" height="9.6" fill="#0b0b0c"/>
 <svg x="589.65" y="683.4" width="57.9" height="37.6" viewBox="0 0 57.9 37.6"><rect width="57.9" height="37.6" fill="#716960"/><use href="#tw" x="16" y="9.5"/></svg>
 <rect x="589.65" y="673.8" width="19" height="9" fill="#0b0b0c"/>
 <rect x="652.60" y="673.1" width="59.3" height="59.3" rx="3" fill="#18191b" stroke="#7c7d7f" stroke-width="1.3"/>
 <rect x="653.30" y="673.8" width="57.9" height="9.6" fill="#0b0b0c"/>
 <svg x="653.30" y="683.4" width="57.9" height="37.6" viewBox="0 0 57.9 37.6"><rect width="57.9" height="37.6" fill="#716960"/><use href="#tw" x="17" y="9.5"/></svg>
 <rect x="653.30" y="673.8" width="19" height="9" fill="#0b0b0c"/>
 <rect x="715.65" y="672.2" width="61" height="61" rx="2" fill="#161719"/>
 <svg x="717.65" y="683" width="57.2" height="37.8" viewBox="0 0 57.2 37.8"><rect width="57.2" height="37.8" fill="#716960"/><use href="#tw" x="20" y="9.5"/></svg>
 <rect x="717.15" y="673.8" width="19" height="9" fill="#101112"/>
 <rect x="779.30" y="672.2" width="61" height="61" rx="2" fill="#161719"/>
 <svg x="790.00" y="674.4" width="37.8" height="56.8" viewBox="0 0 37.8 56.8"><rect width="37.8" height="56.8" fill="#716960"/><g filter="url(#tb)"><path d="M5 57C6 40 10 30 19 27C28 30 33 40 34 57z" fill="#7e766c"/><path d="M16 20v8h6v-8z" fill="#6e5546"/><ellipse cx="19" cy="14" rx="5" ry="6.5" fill="#826656"/><path d="M12 10C11 4 14 1 19.5 1C25 1 27.5 4 26.5 10C26 13 25 15 24 16C24 11 22 8 19 8C16 8 14 9 12 12z" fill="#2f2219"/><path d="M10 46C15 44 22 44 30 47" stroke="#675f55" stroke-width="2" fill="none"/></g></svg>
 <rect x="780.80" y="673.8" width="19" height="9" fill="#101112"/>
 <rect x="842.95" y="672.2" width="61" height="61" rx="2" fill="#161719"/>
 <svg x="844.95" y="683" width="57.2" height="37.8" viewBox="0 0 57.2 37.8"><rect width="57.2" height="37.8" fill="#716960"/><use href="#tw" x="34" y="9.5"/></svg>
 <rect x="844.45" y="673.8" width="19" height="9" fill="#101112"/>
</svg>
<div class="t" style="left:20.0px;top:675.5px;font-size:6.6px;color:#5f6062">RAW</div>
<div class="t" style="left:83.7px;top:675.5px;font-size:6.6px;color:#5f6062">RAW</div>
<div class="t" style="left:147.3px;top:675.5px;font-size:6.6px;color:#5f6062">RAW</div>
<div class="t" style="left:210.9px;top:675.5px;font-size:6.6px;color:#5f6062">RAW</div>
<div class="t" style="left:274.6px;top:675.5px;font-size:6.6px;color:#5f6062">RAW</div>
<div class="t" style="left:338.2px;top:675.5px;font-size:6.6px;color:#5f6062">RAW</div>
<div class="t" style="left:401.9px;top:675.5px;font-size:6.6px;color:#5f6062">RAW</div>
<div class="t" style="left:465.6px;top:675.5px;font-size:6.6px;color:#5f6062">RAW</div>
<div class="t" style="left:529.2px;top:675.5px;font-size:6.6px;color:#5f6062">RAW</div>
<div class="t" style="left:592.9px;top:675.5px;font-size:6.6px;color:#5f6062">RAW</div>
<div class="t" style="left:656.5px;top:675.5px;font-size:6.6px;color:#5f6062">RAW</div>
<div class="t" style="left:720.1px;top:675.5px;font-size:6.6px;color:#5f6062">RAW</div>
<div class="t" style="left:783.8px;top:675.5px;font-size:6.6px;color:#5f6062">RAW</div>
<div class="t" style="left:847.4px;top:675.5px;font-size:6.6px;color:#5f6062">RAW</div>
<svg class="a" style="left:43px;top:675px" width="8" height="8" viewBox="0 0 8 8"><path d="M1 7l1-2.5 4-4 1.5 1.5-4 4z" fill="#6a6b6d"/></svg>
<!-- DIALOG -->
<div class="a" style="left:384px;top:112px;width:416px;height:463px;background:#383b40;border-radius:10px"></div>
<div class="t" style="left:403px;top:126px;font-size:14px;color:#dcdddf;-webkit-text-stroke:0.25px #dcdddf">Sync Settings</div>
<svg class="a" style="left:760px;top:126px" width="15" height="15" viewBox="0 0 15 15"><path d="M1.5 1.5l11.7 11.7M13.2 1.5L1.5 13.2" stroke="#d6d7d9" stroke-width="1.4"/></svg>
<div class="a" style="left:403px;top:154px;width:377px;height:1px;background:#2a2c30"></div>
<div class="t" style="left:404px;top:175px;font-size:11px;font-weight:bold;color:#dedfe1">Filter</div>
<svg class="a" style="left:436px;top:176px" width="11" height="7" viewBox="0 0 11 7"><path d="M1 1.2l4.3 4.3 4.3-4.3" stroke="#c9cacc" stroke-width="1.2" fill="none"/></svg>
<div class="t" style="left:649px;top:176px;font-size:10px;font-weight:bold;color:#d2d3d5">Pop-up Frequency Settings</div>
<div class="a" style="left:403px;top:204px;width:14px;height:14px;border-radius:2.5px;background:#4a8ff0"></div>
<svg class="a" style="left:403px;top:204px" width="14" height="14" viewBox="0 0 14 14"><path d="M3.3 7.2l2.6 2.6 5-5.3" stroke="#f2f6fc" stroke-width="1.3" fill="none"/></svg>
<div class="t" style="left:420.5px;top:206px;font-size:12px;color:#e2e3e5">AI Color Adjustments</div>
<div class="a" style="left:403px;top:239px;width:14px;height:14px;border-radius:2.5px;background:#4a8ff0"></div>
<svg class="a" style="left:403px;top:239px" width="14" height="14" viewBox="0 0 14 14"><path d="M3.3 7.2l2.6 2.6 5-5.3" stroke="#f2f6fc" stroke-width="1.3" fill="none"/></svg>
<div class="t" style="left:420.5px;top:241px;font-size:12px;color:#e2e3e5">Color Adjustments</div>
<svg class="a" style="left:525px;top:242px" width="7" height="9" viewBox="0 0 7 9"><path d="M.5 .5L6.5 4.5L.5 8.5z" fill="#e8e9eb"/></svg>
<div class="a" style="left:403px;top:273px;width:14px;height:14px;border-radius:2.5px;background:#4a8ff0"></div>
<svg class="a" style="left:403px;top:273px" width="14" height="14" viewBox="0 0 14 14"><path d="M3.3 7.2l2.6 2.6 5-5.3" stroke="#f2f6fc" stroke-width="1.3" fill="none"/></svg>
<div class="t" style="left:420.5px;top:275px;font-size:12px;color:#e2e3e5">Portrait Retouching</div>
<svg class="a" style="left:529.5px;top:276px" width="7" height="9" viewBox="0 0 7 9"><path d="M.5 .5L6.5 4.5L.5 8.5z" fill="#e8e9eb"/></svg>
<div class="a" style="left:403px;top:308px;width:14px;height:14px;border-radius:2.5px;background:#4a8ff0"></div>
<svg class="a" style="left:403px;top:308px" width="14" height="14" viewBox="0 0 14 14"><path d="M3.3 7.2l2.6 2.6 5-5.3" stroke="#f2f6fc" stroke-width="1.3" fill="none"/></svg>
<div class="t" style="left:420.5px;top:310px;font-size:12px;color:#e2e3e5">Background Adjustments</div>
<svg class="a" style="left:561px;top:311px" width="7" height="9" viewBox="0 0 7 9"><path d="M.5 .5L6.5 4.5L.5 8.5z" fill="#e8e9eb"/></svg>
<div class="a" style="left:403px;top:342px;width:14px;height:14px;border-radius:2.5px;background:#4a8ff0"></div>
<svg class="a" style="left:403px;top:342px" width="14" height="14" viewBox="0 0 14 14"><path d="M3.3 7.2l2.6 2.6 5-5.3" stroke="#f2f6fc" stroke-width="1.3" fill="none"/></svg>
<div class="t" style="left:420.5px;top:344px;font-size:12px;color:#e2e3e5">Clothes &amp; Accessories Adjustments</div>
<svg class="a" style="left:615px;top:345px" width="7" height="9" viewBox="0 0 7 9"><path d="M.5 .5L6.5 4.5L.5 8.5z" fill="#e8e9eb"/></svg>
<div class="a" style="left:403px;top:376px;width:14px;height:14px;border-radius:2.5px;border:1px solid #8e9094"></div>
<div class="t" style="left:420.5px;top:378px;font-size:12px;color:#e2e3e5">Crop &amp; Rotate</div>
<svg class="a" style="left:502.4px;top:379px" width="7" height="9" viewBox="0 0 7 9"><path d="M.5 .5L6.5 4.5L.5 8.5z" fill="#e8e9eb"/></svg>
<div class="a" style="left:403px;top:525.5px;width:377px;height:1.5px;background:#2a2c30"></div>
<div class="t" style="left:403px;top:546px;font-size:9.5px;color:#a4a6a9">You can also use CMD+C/CMD+V to copy and paste effects.</div>
<div class="a" style="left:715px;top:539px;width:66px;height:24px;border-radius:12px;background:#f8db3b"></div>
<div class="t" style="left:735px;top:546px;font-size:11px;font-weight:bold;color:#17150a">Sync</div>
</div>
<div style="position:absolute;left:0;top:0;width:1px;height:40px;background:linear-gradient(#fff,rgba(255,255,255,.75) 50%,rgba(255,255,255,0))"></div>
</body></html>
